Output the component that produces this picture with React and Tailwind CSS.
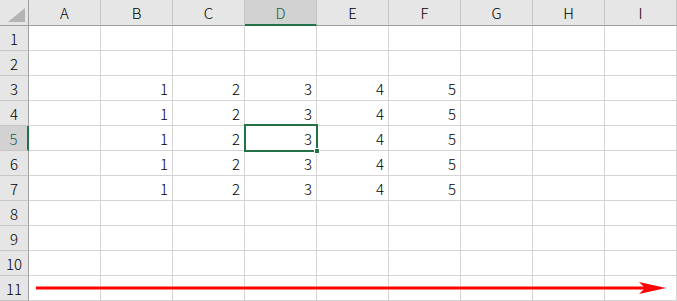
import React from 'react';

const COLS = ['A', 'B', 'C', 'D', 'E', 'F', 'G', 'H', 'I'];
const ROWS = [1, 2, 3, 4, 5, 6, 7, 8, 9, 10, 11];

// values keyed by row number; columns B..F
const DATA = {
  3: [1, 2, 3, 4, 5],
  4: [1, 2, 3, 4, 5],
  5: [1, 2, 3, 4, 5],
  6: [1, 2, 3, 4, 5],
  7: [1, 2, 3, 4, 5],
};

const ACTIVE_COL = 'D';
const ACTIVE_ROW = 5;

function ColumnHeader({ label }) {
  const active = label === ACTIVE_COL;
  return (
    <div
      className={`w-[72px] h-[26px] flex items-center justify-center border-r border-[#c6c6c6] ${
        active
          ? 'bg-[#d2d2d2] text-[#1e5e3a] border-b-2 border-b-[#217346]'
          : 'bg-[#e6e6e6] text-black border-b border-b-[#9e9e9e]'
      }`}
    >
      {label}
    </div>
  );
}

function RowHeader({ n }) {
  const active = n === ACTIVE_ROW;
  return (
    <div
      className={`w-[29px] h-[25px] flex items-center justify-center border-b border-[#c6c6c6] ${
        active
          ? 'bg-[#d2d2d2] text-[#1e5e3a] border-r-2 border-r-[#217346]'
          : 'bg-[#e6e6e6] text-black border-r border-r-[#9e9e9e]'
      }`}
    >
      {n}
    </div>
  );
}

export default function App() {
  return (
    <div
      className="relative w-[677px] h-[301px] overflow-hidden bg-white text-[15px] leading-none font-light"
      style={{ fontFamily: '"Noto Sans CJK JP", "Noto Sans", sans-serif' }}
    >
      {/* header row */}
      <div className="flex">
        <div className="w-[29px] h-[26px] bg-[#e6e6e6] border-r border-b border-[#9e9e9e] flex items-end justify-end pr-[3px] pb-[3px]">
          <svg width="17" height="14" viewBox="0 0 17 14">
            <polygon points="17,0 17,14 0,14" fill="#b4b4b4" />
          </svg>
        </div>
        {COLS.map((c) => (
          <ColumnHeader key={c} label={c} />
        ))}
      </div>

      {/* body rows */}
      {ROWS.map((r) => (
        <div key={r} className="flex">
          <RowHeader n={r} />
          {COLS.map((c, i) => {
            const vals = DATA[r];
            const v = vals && i >= 1 && i <= 5 ? vals[i - 1] : null;
            return (
              <div
                key={c}
                className="w-[72px] h-[25px] border-r border-b border-[#d4d4d4] flex items-center justify-end pr-[4px] text-black"
              >
                {v}
              </div>
            );
          })}
        </div>
      ))}

      {/* active cell outline */}
      <div className="absolute left-[244px] top-[124px] w-[74px] h-[28px] border-2 border-[#217346] pointer-events-none" />
      <div className="absolute left-[314px] top-[148px] w-[6px] h-[6px] bg-[#217346] border border-white" />

      {/* red arrow */}
      <svg className="absolute left-0 top-0" width="677" height="301" viewBox="0 0 677 301">
        <line x1="36" y1="288" x2="646" y2="288" stroke="#ff0000" strokeWidth="3" />
        <polygon points="639,282 666,288 639,294 645,288" fill="#ff0000" />
      </svg>
    </div>
  );
}
